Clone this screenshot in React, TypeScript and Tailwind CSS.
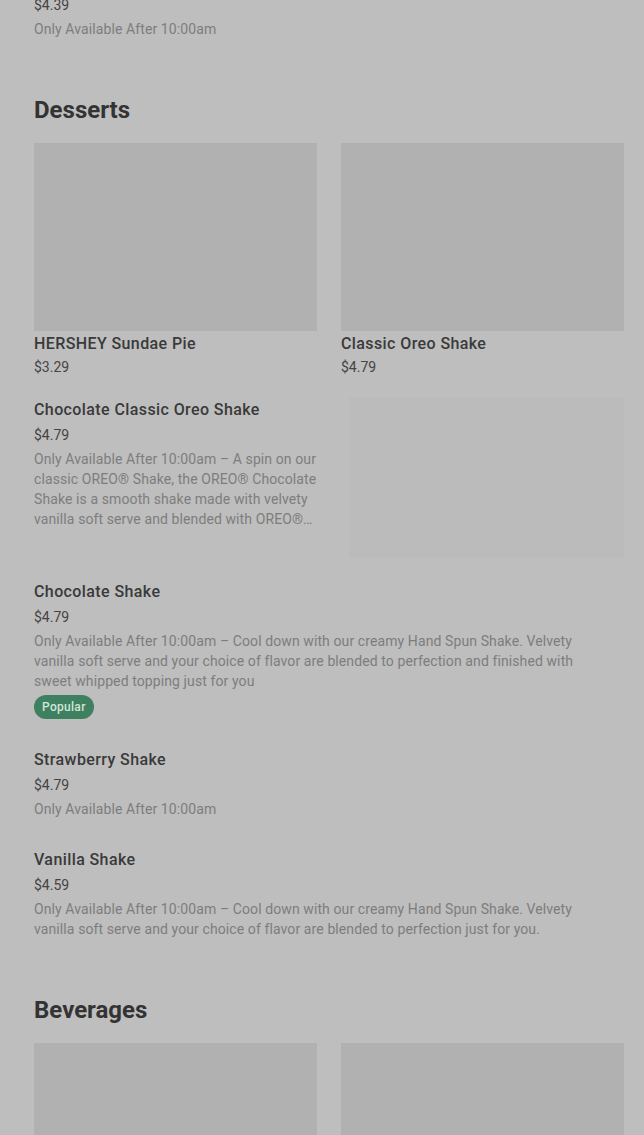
import React from 'react';

type Item = {
  name: string;
  price: string;
  desc?: string;
  popular?: boolean;
};

const CardTile: React.FC<{ name?: string; price?: string }> = ({ name, price }) => (
  <div className="flex flex-col">
    <div className="h-[188px] w-full bg-[#b1b1b1]" />
    {name && (
      <>
        <div className="mt-px text-[16px] leading-6 font-medium tracking-[0.4px] text-[#3a3a3a]">{name}</div>
        <div className="mt-px text-[14px] leading-5 text-[#444444]">{price}</div>
      </>
    )}
  </div>
);

const ListItem: React.FC<{ item: Item }> = ({ item }) => (
  <div className="flex flex-col pr-[43px]">
    <div className="text-[16px] leading-6 font-medium tracking-[0.4px] text-[#3a3a3a]">{item.name}</div>
    <div className="mt-[3px] text-[14px] leading-5 text-[#444444]">{item.price}</div>
    {item.desc && <p className="mt-1 text-[14px] leading-5 tracking-[0.1px] text-[#7d7d7d]">{item.desc}</p>}
    {item.popular && (
      <span className="mt-1 self-start rounded-full bg-[#3f8060] px-2 text-[12px] leading-6 font-medium tracking-[0.3px] text-[#cfe6d8]">
        Popular
      </span>
    )}
  </div>
);

const shakes: Item[] = [
  {
    name: 'Chocolate Shake',
    price: '$4.79',
    desc: 'Only Available After 10:00am – Cool down with our creamy Hand Spun Shake. Velvety vanilla soft serve and your choice of flavor are blended to perfection and finished with sweet whipped topping just for you',
    popular: true,
  },
  { name: 'Strawberry Shake', price: '$4.79', desc: 'Only Available After 10:00am' },
  {
    name: 'Vanilla Shake',
    price: '$4.59',
    desc: 'Only Available After 10:00am – Cool down with our creamy Hand Spun Shake. Velvety vanilla soft serve and your choice of flavor are blended to perfection just for you.',
  },
];

export default function App() {
  return (
    <div className="h-[1135px] overflow-hidden bg-[#bebebe] pl-[34px] pr-5 font-['Roboto',sans-serif]">
      {/* tail of previous section */}
      <div className="-mt-[5px] text-[14px] leading-5 text-[#444444]">$4.39</div>
      <div className="mt-1 text-[14px] leading-5 tracking-[0.1px] text-[#7d7d7d]">Only Available After 10:00am</div>

      <h2 className="mt-[55px] text-[24px] leading-8 font-bold text-[#333333]">Desserts</h2>
      <div className="mt-[17px] grid grid-cols-2 gap-6">
        <CardTile name="HERSHEY Sundae Pie" price="$3.29" />
        <CardTile name="Classic Oreo Shake" price="$4.79" />
      </div>

      <div className="mt-[21px] flex gap-4">
        <div className="flex min-w-0 flex-1 flex-col">
          <div className="text-[16px] leading-6 font-medium tracking-[0.4px] text-[#3a3a3a]">Chocolate Classic Oreo Shake</div>
          <div className="mt-[3px] text-[14px] leading-5 text-[#444444]">$4.79</div>
          <p className="mt-1 line-clamp-4 text-[14px] leading-5 tracking-[0.1px] text-[#7d7d7d]">
            Only Available After 10:00am – A spin on our classic OREO® Shake, the OREO® Chocolate Shake is a smooth shake made with velvety vanilla soft serve and blended with OREO® cookie pieces for a rich, chocolatey treat.
          </p>
        </div>
        <div className="h-[160px] w-[275px] shrink-0 bg-[#bbbbbb]" />
      </div>

      <div className="mt-[22px] flex flex-col gap-[29px]">
        {shakes.map((s) => (
          <ListItem key={s.name} item={s} />
        ))}
      </div>

      <h2 className="mt-[55px] text-[24px] leading-8 font-bold text-[#333333]">Beverages</h2>
      <div className="mt-[17px] grid grid-cols-2 gap-6">
        <CardTile />
        <CardTile />
      </div>
    </div>
  );
}
